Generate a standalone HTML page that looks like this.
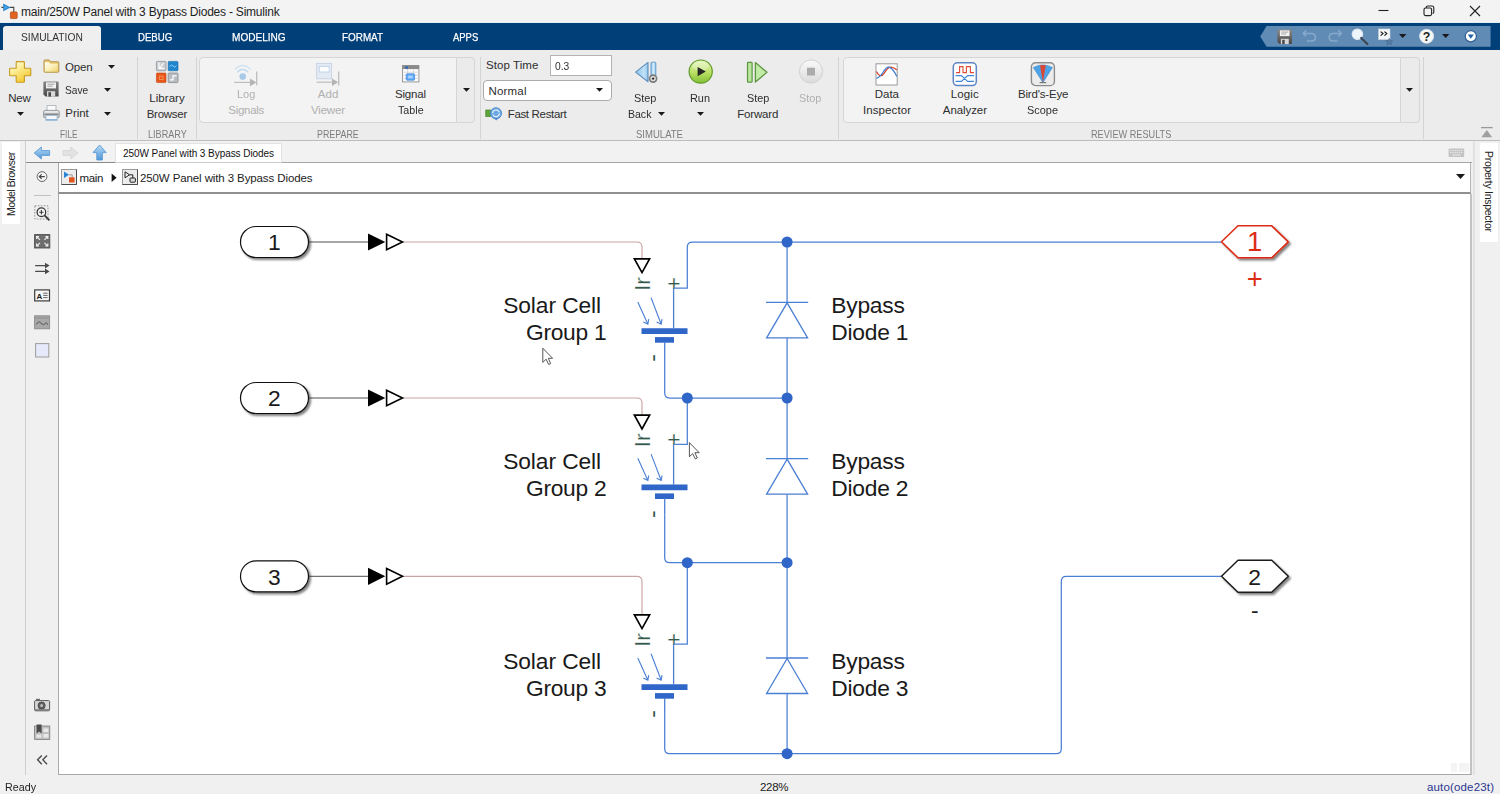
<!DOCTYPE html>
<html><head><meta charset="utf-8"><title>main/250W Panel with 3 Bypass Diodes - Simulink</title>
<style>
html,body{margin:0;padding:0;}
body{width:1500px;height:794px;overflow:hidden;position:relative;background:#f0f0f0;font-family:"Liberation Sans",sans-serif;}
.b{position:absolute;box-sizing:border-box;}
.t{position:absolute;white-space:pre;line-height:1;}
svg{overflow:visible;}
svg text{font-family:"Liberation Sans",sans-serif;}
</style></head><body>
<div class="b" style="left:0px;top:0px;width:1500px;height:23px;background:#f3f3f3;"></div>
<span class="t" style="left:21.0px;top:6.1px;font-size:12px;color:#1e1e1e;letter-spacing:-0.22px;">main/250W Panel with 3 Bypass Diodes - Simulink</span>
<div class="b" style="left:0px;top:22px;width:1500px;height:1px;background:#e3eef6;"></div>
<div class="b" style="left:0px;top:23px;width:1500px;height:27px;background:#003f77;"></div>
<div class="b" style="left:3px;top:26px;width:98px;height:25px;background:#efefef;border-radius:3px 3px 0 0;"></div>
<span class="t" style="left:20.7px;top:31.8px;font-size:11.5px;color:#333;letter-spacing:0.00px;transform:scaleX(0.890);transform-origin:0 0;">SIMULATION</span>
<span class="t" style="left:138.3px;top:31.8px;font-size:11.5px;color:#fff;letter-spacing:0.00px;transform:scaleX(0.836);transform-origin:0 0;-webkit-text-stroke:0.25px #fff;">DEBUG</span>
<span class="t" style="left:232.3px;top:31.8px;font-size:11.5px;color:#fff;letter-spacing:0.00px;transform:scaleX(0.875);transform-origin:0 0;-webkit-text-stroke:0.25px #fff;">MODELING</span>
<span class="t" style="left:341.7px;top:31.8px;font-size:11.5px;color:#fff;letter-spacing:0.00px;transform:scaleX(0.860);transform-origin:0 0;-webkit-text-stroke:0.25px #fff;">FORMAT</span>
<span class="t" style="left:453.3px;top:31.8px;font-size:11.5px;color:#fff;letter-spacing:0.00px;transform:scaleX(0.821);transform-origin:0 0;-webkit-text-stroke:0.25px #fff;">APPS</span>
<div class="b" style="left:0px;top:50px;width:1500px;height:91px;background:#ececec;border-bottom:1px solid #bdbdbd;"></div>
<div class="b" style="left:137px;top:57px;width:1px;height:82px;background:#d4d4d4;"></div>
<div class="b" style="left:196px;top:57px;width:1px;height:82px;background:#d4d4d4;"></div>
<div class="b" style="left:480px;top:57px;width:1px;height:82px;background:#d4d4d4;"></div>
<div class="b" style="left:838px;top:57px;width:1px;height:82px;background:#d4d4d4;"></div>
<div class="b" style="left:1423px;top:57px;width:1px;height:82px;background:#d4d4d4;"></div>
<div class="b" style="left:199px;top:57px;width:276px;height:66px;background:#f3f3f3;border:1px solid #d6d6d6;border-radius:4px;"></div>
<div class="b" style="left:456px;top:57px;width:19px;height:66px;background:#ebebeb;border:1px solid #d6d6d6;border-radius:0 4px 4px 0;"></div>
<div class="b" style="left:843px;top:57px;width:577px;height:66px;background:#f3f3f3;border:1px solid #d6d6d6;border-radius:4px;"></div>
<div class="b" style="left:1400px;top:57px;width:20px;height:66px;background:#ebebeb;border:1px solid #d6d6d6;border-radius:0 4px 4px 0;"></div>
<svg class="b" style="left:461.5px;top:87.2px;" width="9" height="5.7" viewBox="0 0 9 5.7"><path d="M1 1h7l-3.5 3.7z" fill="#1a1a1a"/></svg>
<svg class="b" style="left:1404.5px;top:87.2px;" width="9" height="5.7" viewBox="0 0 9 5.7"><path d="M1 1h7l-3.5 3.7z" fill="#1a1a1a"/></svg>
<span class="t" style="left:60.0px;top:129.0px;font-size:10.8px;color:#7c7c7c;letter-spacing:0.00px;transform:scaleX(0.776);transform-origin:0 0;">FILE</span>
<span class="t" style="left:147.7px;top:129.0px;font-size:10.8px;color:#7c7c7c;letter-spacing:0.00px;transform:scaleX(0.843);transform-origin:0 0;">LIBRARY</span>
<span class="t" style="left:317.3px;top:129.0px;font-size:10.8px;color:#7c7c7c;letter-spacing:0.00px;transform:scaleX(0.821);transform-origin:0 0;">PREPARE</span>
<span class="t" style="left:635.7px;top:129.0px;font-size:10.8px;color:#7c7c7c;letter-spacing:0.00px;transform:scaleX(0.883);transform-origin:0 0;">SIMULATE</span>
<span class="t" style="left:1090.7px;top:129.0px;font-size:10.8px;color:#7c7c7c;letter-spacing:0.00px;transform:scaleX(0.849);transform-origin:0 0;">REVIEW RESULTS</span>
<span class="t" style="left:8.3px;top:93.1px;font-size:11.5px;color:#2e2e2e;letter-spacing:-0.30px;">New</span>
<svg class="b" style="left:15.8px;top:110.7px;" width="9" height="5.7" viewBox="0 0 9 5.7"><path d="M1 1h7l-3.5 3.7z" fill="#1a1a1a"/></svg>
<span class="t" style="left:65.0px;top:61.9px;font-size:11.5px;color:#2e2e2e;letter-spacing:-0.14px;">Open</span>
<svg class="b" style="left:107.4px;top:63.9px;" width="9" height="5.7" viewBox="0 0 9 5.7"><path d="M1 1h7l-3.5 3.7z" fill="#1a1a1a"/></svg>
<span class="t" style="left:65.0px;top:84.6px;font-size:11.5px;color:#2e2e2e;letter-spacing:0.00px;transform:scaleX(0.885);transform-origin:0 0;">Save</span>
<svg class="b" style="left:102.5px;top:87.2px;" width="9" height="5.7" viewBox="0 0 9 5.7"><path d="M1 1h7l-3.5 3.7z" fill="#1a1a1a"/></svg>
<span class="t" style="left:65.3px;top:107.7px;font-size:11.5px;color:#2e2e2e;letter-spacing:-0.06px;">Print</span>
<svg class="b" style="left:103.0px;top:110.8px;" width="9" height="5.7" viewBox="0 0 9 5.7"><path d="M1 1h7l-3.5 3.7z" fill="#1a1a1a"/></svg>
<span class="t" style="left:149.3px;top:93.4px;font-size:11.5px;color:#2e2e2e;letter-spacing:0.04px;">Library</span>
<span class="t" style="left:146.7px;top:108.7px;font-size:11.5px;color:#2e2e2e;letter-spacing:-0.26px;">Browser</span>
<span class="t" style="left:236.7px;top:88.9px;font-size:11.5px;color:#b0b0b0;letter-spacing:0.00px;transform:scaleX(0.954);transform-origin:0 0;">Log</span>
<span class="t" style="left:228.3px;top:104.6px;font-size:11.5px;color:#b0b0b0;letter-spacing:-0.29px;">Signals</span>
<span class="t" style="left:317.7px;top:88.9px;font-size:11.5px;color:#b0b0b0;letter-spacing:0.07px;">Add</span>
<span class="t" style="left:311.0px;top:104.6px;font-size:11.5px;color:#b0b0b0;letter-spacing:-0.19px;">Viewer</span>
<span class="t" style="left:395.0px;top:88.9px;font-size:11.5px;color:#2e2e2e;letter-spacing:-0.19px;">Signal</span>
<span class="t" style="left:397.7px;top:104.6px;font-size:11.5px;color:#2e2e2e;letter-spacing:0.00px;transform:scaleX(0.931);transform-origin:0 0;">Table</span>
<span class="t" style="left:486.0px;top:60.4px;font-size:11.5px;color:#2e2e2e;letter-spacing:0.07px;">Stop Time</span>
<div class="b" style="left:550px;top:55.3px;width:62.4px;height:20.3px;background:#fff;border:1px solid #b3b3b3;"></div>
<span class="t" style="left:555.0px;top:61.1px;font-size:11.5px;color:#2e2e2e;letter-spacing:0.00px;transform:scaleX(0.894);transform-origin:0 0;">0.3</span>
<div class="b" style="left:483.4px;top:79.6px;width:129px;height:21px;background:#fff;border:1px solid #ababab;border-radius:4px;"></div>
<span class="t" style="left:488.5px;top:85.9px;font-size:11.5px;color:#2e2e2e;letter-spacing:0.19px;">Normal</span>
<svg class="b" style="left:594.5px;top:87.2px;" width="9" height="5.7" viewBox="0 0 9 5.7"><path d="M1 1h7l-3.5 3.7z" fill="#1a1a1a"/></svg>
<span class="t" style="left:507.7px;top:108.7px;font-size:11.5px;color:#2e2e2e;letter-spacing:-0.33px;">Fast Restart</span>
<span class="t" style="left:634.3px;top:93.1px;font-size:11.5px;color:#2e2e2e;letter-spacing:0.00px;transform:scaleX(0.947);transform-origin:0 0;">Step</span>
<span class="t" style="left:628.3px;top:108.7px;font-size:11.5px;color:#2e2e2e;letter-spacing:0.00px;transform:scaleX(0.915);transform-origin:0 0;">Back</span>
<svg class="b" style="left:657.2px;top:110.9px;" width="9" height="5.7" viewBox="0 0 9 5.7"><path d="M1 1h7l-3.5 3.7z" fill="#1a1a1a"/></svg>
<span class="t" style="left:690.0px;top:93.1px;font-size:11.5px;color:#2e2e2e;letter-spacing:0.00px;transform:scaleX(0.948);transform-origin:0 0;">Run</span>
<svg class="b" style="left:696.2px;top:110.9px;" width="9" height="5.7" viewBox="0 0 9 5.7"><path d="M1 1h7l-3.5 3.7z" fill="#1a1a1a"/></svg>
<span class="t" style="left:746.7px;top:93.1px;font-size:11.5px;color:#2e2e2e;letter-spacing:0.00px;transform:scaleX(0.943);transform-origin:0 0;">Step</span>
<span class="t" style="left:737.3px;top:108.7px;font-size:11.5px;color:#2e2e2e;letter-spacing:-0.20px;">Forward</span>
<span class="t" style="left:799.3px;top:93.1px;font-size:11.5px;color:#b0b0b0;letter-spacing:0.00px;transform:scaleX(0.947);transform-origin:0 0;">Stop</span>
<span class="t" style="left:874.7px;top:89.4px;font-size:11.5px;color:#2e2e2e;letter-spacing:0.00px;">Data</span>
<span class="t" style="left:863.0px;top:104.9px;font-size:11.5px;color:#2e2e2e;letter-spacing:0.09px;">Inspector</span>
<span class="t" style="left:950.7px;top:89.4px;font-size:11.5px;color:#2e2e2e;letter-spacing:0.13px;">Logic</span>
<span class="t" style="left:942.8px;top:104.9px;font-size:11.5px;color:#2e2e2e;letter-spacing:-0.08px;">Analyzer</span>
<span class="t" style="left:1018.0px;top:89.4px;font-size:11.5px;color:#2e2e2e;letter-spacing:-0.19px;">Bird's-Eye</span>
<span class="t" style="left:1027.0px;top:104.9px;font-size:11.5px;color:#2e2e2e;letter-spacing:0.00px;transform:scaleX(0.951);transform-origin:0 0;">Scope</span>
<div class="b" style="left:2px;top:142px;width:18px;height:82px;background:#fff;"></div>
<span class="t" style="left:15.3px;top:215.6px;font-size:10.5px;color:#222;letter-spacing:-0.48px;transform-origin:0 0;transform:rotate(-90deg) translateY(-0.8465em);">Model Browser</span>
<div class="b" style="left:25px;top:141px;width:1px;height:634px;background:#cfcfcf;"></div>
<div class="b" style="left:26px;top:141px;width:1446px;height:21px;background:#f2f2f2;"></div>
<div class="b" style="left:26px;top:162px;width:1446px;height:1px;background:#a6a6a6;"></div>
<div class="b" style="left:26px;top:162px;width:89px;height:1px;background:#8a8a8a;"></div>
<div class="b" style="left:114.5px;top:143px;width:167.5px;height:20px;background:#fff;border-top:1px solid #e3e3e3;border-left:1px solid #e3e3e3;border-right:1px solid #e3e3e3;"></div>
<div class="b" style="left:115px;top:162px;width:166.5px;height:1px;background:#cbcbcb;"></div>
<span class="t" style="left:123.0px;top:149.3px;font-size:10px;color:#111;letter-spacing:-0.06px;">250W Panel with 3 Bypass Diodes</span>
<div class="b" style="left:57.5px;top:163px;width:1413.5px;height:31px;background:#fff;border-left:1px solid #a9a9a9;border-right:1px solid #b4b4b4;border-bottom:2px solid #8f8f8f;"></div>
<span class="t" style="left:79.5px;top:172.7px;font-size:11.5px;color:#222;letter-spacing:-0.31px;">main</span>
<span class="t" style="left:140.0px;top:172.7px;font-size:11.5px;color:#222;letter-spacing:-0.11px;">250W Panel with 3 Bypass Diodes</span>
<div class="b" style="left:57.5px;top:194px;width:1414px;height:581px;background:#fff;border-left:1px solid #a9a9a9;border-right:2px solid #c2c2c2;border-bottom:1px solid #a8a8a8;"></div>
<div class="b" style="left:1473px;top:141px;width:2px;height:634px;background:#e2e2e2;"></div>
<div class="b" style="left:1451px;top:763px;width:6px;height:9px;background:#f4f4f4;"></div>
<div class="b" style="left:1459px;top:763px;width:10px;height:9px;background:#f4f4f4;"></div>
<div class="b" style="left:1480px;top:143px;width:18px;height:99px;background:#fff;"></div>
<span class="t" style="left:1484.5px;top:151.3px;font-size:10.5px;color:#222;letter-spacing:-0.28px;transform-origin:0 0;transform:rotate(90deg) translateY(-0.8465em);">Property Inspector</span>
<span class="t" style="left:5.0px;top:781.6px;font-size:11.5px;color:#222;letter-spacing:0.00px;transform:scaleX(0.933);transform-origin:0 0;">Ready</span>
<span class="t" style="left:760.0px;top:781.6px;font-size:11.5px;color:#222;letter-spacing:-0.30px;">228%</span>
<span class="t" style="left:1427.0px;top:781.6px;font-size:11.5px;color:#2a3590;letter-spacing:0.16px;">auto(ode23t)</span>
<svg class="b" style="left:0;top:0" width="0" height="0"><defs>
<linearGradient id="gY" x1="0" y1="0" x2="0.6" y2="1"><stop offset="0" stop-color="#fffef2"/><stop offset="0.45" stop-color="#fdec94"/><stop offset="1" stop-color="#f4c92e"/></linearGradient>
<linearGradient id="gF" x1="0" y1="0" x2="1" y2="1"><stop offset="0" stop-color="#fffef4"/><stop offset="0.5" stop-color="#fbf0bd"/><stop offset="1" stop-color="#f0d26c"/></linearGradient>
<linearGradient id="gG" x1="0" y1="0" x2="0" y2="1"><stop offset="0" stop-color="#e4f5b4"/><stop offset="0.55" stop-color="#b9df62"/><stop offset="1" stop-color="#80be34"/></linearGradient>
<linearGradient id="gB" x1="0" y1="0" x2="0" y2="1"><stop offset="0" stop-color="#b9dcf7"/><stop offset="1" stop-color="#4f97d6"/></linearGradient>
<linearGradient id="gS" x1="0" y1="0" x2="0" y2="1"><stop offset="0" stop-color="#fafafa"/><stop offset="1" stop-color="#dadada"/></linearGradient>
<linearGradient id="gD" x1="0" y1="0" x2="0" y2="1"><stop offset="0" stop-color="#878787"/><stop offset="1" stop-color="#484848"/></linearGradient>
<linearGradient id="gGr" x1="0" y1="0" x2="0" y2="1"><stop offset="0" stop-color="#f2f2f2"/><stop offset="1" stop-color="#bdbdbd"/></linearGradient>
<linearGradient id="gB2" x1="0" y1="0" x2="1" y2="0"><stop offset="0" stop-color="#8fc3ea"/><stop offset="0.7" stop-color="#c2e3f8"/><stop offset="1" stop-color="#8ebfe6"/></linearGradient>
<linearGradient id="gB3" x1="0" y1="0" x2="1" y2="0"><stop offset="0" stop-color="#8ec2ea"/><stop offset="0.5" stop-color="#d4eefd"/><stop offset="1" stop-color="#8ec2ea"/></linearGradient>
</defs></svg>
<svg class="b" style="left:0px;top:0px;" width="20" height="20" viewBox="0 0 20 20"><path d="M1.4 7.4H4M10 7.4H13.8V12.2" stroke="#444" stroke-width="1.1" fill="none"/><path d="M3.2 3.4L10.6 7.4L3.2 11.3z" fill="#2b86d2"/><path d="M4.6 5.8L7.6 7.4L4.6 9z" fill="#55b0ea"/><rect x="10.4" y="11.9" width="6.8" height="6.7" rx="0.9" fill="#e0641f" stroke="#b84c14" stroke-width="0.7"/></svg>
<svg class="b" style="left:1378px;top:5px;" width="12" height="12" viewBox="0 0 12 12"><path d="M0.5 5.5H10.5" stroke="#222" stroke-width="1.1"/></svg>
<svg class="b" style="left:1423px;top:5px;" width="12" height="12" viewBox="0 0 12 12"><rect x="1" y="3" width="7.6" height="7.6" rx="1.6" fill="none" stroke="#222" stroke-width="1.1"/><path d="M3.2 3V2.4Q3.2 1 4.8 1H9Q10.8 1 10.8 2.8V7Q10.8 8.4 9.6 8.5" fill="none" stroke="#222" stroke-width="1.1"/></svg>
<svg class="b" style="left:1469px;top:5px;" width="12" height="12" viewBox="0 0 12 12"><path d="M1 1L11 11M11 1L1 11" stroke="#222" stroke-width="1.1"/></svg>
<svg class="b" style="left:8px;top:60px;" width="25" height="24" viewBox="0 0 25 24"><path d="M9 1.6H15.6Q16.4 1.6 16.4 2.4V8.2H22Q22.8 8.2 22.8 9V15Q22.8 15.8 22 15.8H16.4V21.4Q16.4 22.2 15.6 22.2H9Q8.2 22.2 8.2 21.4V15.8H2.4Q1.6 15.8 1.6 15V9Q1.6 8.2 2.4 8.2H8.2V2.4Q8.2 1.6 9 1.6z" fill="url(#gY)" stroke="#c79a22" stroke-width="1.1"/></svg>
<svg class="b" style="left:43px;top:59px;" width="17" height="14" viewBox="0 0 17 14"><path d="M1 1.8Q1 1 1.8 1H6.2L7.8 2.8H15Q15.8 2.8 15.8 3.6V12.4Q15.8 13.2 15 13.2H1.8Q1 13.2 1 12.4z" fill="#e8cc74" stroke="#b3924a" stroke-width="1"/><path d="M1.9 12.5V3.2H5.6L7.2 4.8H14.9V12.5z" fill="url(#gF)"/></svg>
<svg class="b" style="left:43.4px;top:81px;" width="16.0" height="16.0" viewBox="0 0 16 16"><path d="M1 0.6H15Q15.6 0.6 15.6 1.2V15Q15.6 15.6 15 15.6H2.6L0.4 13.4V1.2Q0.4 0.6 1 0.6z" fill="url(#gD)"/><rect x="3" y="1.4" width="10" height="6" fill="#f2f2f2"/><path d="M4.4 3.2H11.6M4.4 5.2H9.6" stroke="#9a9a9a" stroke-width="0.9"/><rect x="4" y="10.2" width="8.2" height="5.4" fill="#d9d9d9"/><rect x="5.4" y="11.2" width="2.6" height="4.4" fill="#4a4a4a"/></svg>
<svg class="b" style="left:43px;top:105px;" width="17" height="16" viewBox="0 0 17 16"><rect x="4" y="0.6" width="9" height="6" fill="#fbfbfb" stroke="#a6adb5" stroke-width="0.8"/><rect x="0.6" y="5.4" width="15.6" height="7.4" rx="1.6" fill="url(#gGr)" stroke="#7d848c" stroke-width="0.8"/><path d="M1.4 9.2H15.4" stroke="#6d747c" stroke-width="1.2"/><rect x="3" y="10.6" width="11" height="4.2" fill="#f4f8fc" stroke="#9fb4c8" stroke-width="0.7"/><path d="M2.6 15H14.4" stroke="#5f9bd0" stroke-width="1"/></svg>
<svg class="b" style="left:156px;top:61px;" width="23" height="22" viewBox="0 0 23 22"><rect x="0.4" y="0.4" width="9.6" height="9.4" rx="0.8" fill="#c9cdd2" stroke="#8f959c" stroke-width="0.8"/><path d="M3 1.6V7.4H8.2M3.6 6.8L7.6 2.2" stroke="#fff" stroke-width="1.1" fill="none"/><rect x="12.2" y="0.4" width="9.8" height="9.4" rx="0.8" fill="#1f85cc" stroke="#176aa8" stroke-width="0.6"/><path d="M13.8 5.6Q15.4 2.4 17 5Q18.6 7.6 20.4 4.6" stroke="#8fd0ff" stroke-width="1" fill="none"/><rect x="0.4" y="12" width="9.6" height="9.6" rx="0.8" fill="#e8561a" stroke="#c4440f" stroke-width="0.6"/><rect x="3.6" y="15.2" width="3.4" height="3.4" fill="none" stroke="#f59a5c" stroke-width="0.9"/><rect x="12.2" y="12" width="9.8" height="9.6" rx="0.8" fill="#b9bdc2" stroke="#858b92" stroke-width="0.8"/><path d="M13.8 18.8H17V14.8H20.6" stroke="#fff" stroke-width="1.2" fill="none"/></svg>
<svg class="b" style="left:232px;top:62px;" width="28" height="25" viewBox="0 0 28 25"><circle cx="10.7" cy="14.6" r="3.3" fill="#a9c9e8"/><path d="M5.2 10.2Q10.7 4.6 16.2 10.2" stroke="#bcd7ee" stroke-width="1.3" fill="none"/><path d="M2.6 7.6Q10.7 -0.6 18.8 7.6" stroke="#d0e3f3" stroke-width="1.3" fill="none"/><path d="M2.2 20.4H19" stroke="#bdbdbd" stroke-width="1.2"/><path d="M18 16.4L24.4 20.4L18 24.2z" fill="#b4b4b4"/><path d="M24.7 9.4V23.4" stroke="#bdbdbd" stroke-width="1.3"/></svg>
<svg class="b" style="left:315px;top:62px;" width="26" height="25" viewBox="0 0 26 25"><rect x="1.6" y="1.4" width="15" height="15.4" fill="#e3eaf3" stroke="#c6d3e2" stroke-width="0.9"/><rect x="4.2" y="4.4" width="10" height="5.6" fill="#fbfdff" stroke="#bcd0e6" stroke-width="0.9"/><path d="M1.6 20.2H18" stroke="#bdbdbd" stroke-width="1.2"/><path d="M17 16.4L23.2 20.2L17 24z" fill="#b4b4b4"/><path d="M23.7 9.6V23.4" stroke="#bdbdbd" stroke-width="1.3"/></svg>
<svg class="b" style="left:402px;top:65px;" width="18" height="18" viewBox="0 0 18 18"><rect x="0.5" y="0.5" width="16.4" height="16.4" fill="#fdfdfd" stroke="#8d8d8d" stroke-width="0.9"/><rect x="0.5" y="0.5" width="16.4" height="3.6" fill="#8a8a8a"/><circle cx="4.6" cy="2.6" r="1.3" fill="#1c63c4"/><path d="M0.5 7.2H17M0.5 10.2H17M0.5 13.4H17M5.6 4V17M11.4 4V17" stroke="#cfcfcf" stroke-width="0.8"/><rect x="4.2" y="8.8" width="8.4" height="6.4" rx="1" fill="#5fa8f5" stroke="#3f8be0" stroke-width="0.7"/><rect x="6" y="10.6" width="4.8" height="2.8" fill="#a9d2ff"/></svg>
<svg class="b" style="left:485px;top:107px;" width="18" height="14" viewBox="0 0 18 14"><rect x="0.8" y="3" width="4.8" height="6.6" fill="#5da53a" stroke="#3f7f24" stroke-width="0.7"/><circle cx="11" cy="6.3" r="5.6" fill="#6aa7e4" stroke="#3f7fc6" stroke-width="0.8"/><path d="M7.6 6.3A3.4 3.4 0 0 1 14.2 5.2M14.4 6.3A3.4 3.4 0 0 1 7.8 7.4" stroke="#e8f3ff" stroke-width="1.1" fill="none"/><path d="M9.6 11.6L11.2 13.6L12.6 11.6z" fill="#3f7fc6"/></svg>
<svg class="b" style="left:634px;top:61px;" width="24" height="23" viewBox="0 0 24 23"><path d="M14 1.4V20.8L1.6 11.1z" fill="url(#gB2)" stroke="#5b8fbf" stroke-width="1.1" stroke-linejoin="round"/><rect x="17" y="1.2" width="4.8" height="15" rx="0.8" fill="url(#gB3)" stroke="#6a9cc9" stroke-width="1"/><circle cx="19.1" cy="17.6" r="4.3" fill="#7a7a7a"/><circle cx="19.1" cy="17.6" r="2.7" fill="#e2e2e2"/><circle cx="19.1" cy="17.6" r="1.2" fill="#2e2e2e"/></svg>
<svg class="b" style="left:688px;top:59px;" width="26" height="26" viewBox="0 0 26 26"><circle cx="12.7" cy="12.6" r="11.6" fill="url(#gG)" stroke="#5f9b2a" stroke-width="1.2"/><ellipse cx="12.7" cy="7" rx="8.4" ry="4.6" fill="#fff" opacity="0.28"/><path d="M9.6 8L17.8 12.6L9.6 17.2z" fill="#262626"/></svg>
<svg class="b" style="left:746px;top:61px;" width="23" height="23" viewBox="0 0 23 23"><rect x="1.5" y="1.4" width="4.6" height="19.8" rx="0.6" fill="#b9e69c" stroke="#5f9642" stroke-width="1.2"/><path d="M9.4 1.6L21 11.3L9.4 21z" fill="#c2eba6" stroke="#5f9642" stroke-width="1.3" stroke-linejoin="round"/></svg>
<svg class="b" style="left:798px;top:59px;" width="26" height="26" viewBox="0 0 26 26"><circle cx="13" cy="12.5" r="11.6" fill="url(#gS)" stroke="#d2d2d2" stroke-width="1"/><rect x="9" y="8.7" width="8" height="7.8" fill="#ababab"/></svg>
<svg class="b" style="left:875px;top:63px;" width="24" height="23" viewBox="0 0 24 23"><rect x="1" y="0.8" width="21.2" height="21.2" fill="#fff" stroke="#9a9a9a" stroke-width="1"/><path d="M1.4 8.6Q5.4 16.4 9.6 9.6T17 4.4Q19.6 4.8 21.8 7" stroke="#d8422c" stroke-width="1.2" fill="none"/><path d="M1.4 15.4Q5 14.4 8.4 8.8T14.6 4.4Q18.4 6 21.8 13.6" stroke="#3b7dd0" stroke-width="1.2" fill="none"/></svg>
<svg class="b" style="left:952px;top:62px;" width="26" height="25" viewBox="0 0 26 25"><rect x="1.3" y="0.8" width="23" height="22.8" rx="4" fill="#fff" stroke="#5f84c4" stroke-width="1.5"/><path d="M4 10.6H7.6V4.6H11V10.6H14.4V4.6H18.4V10.6H22" stroke="#e04a36" stroke-width="1.1" fill="none"/><path d="M3.6 13.6H9.4L15.6 19.4H22M3.6 19.4H9.4L15.6 13.6H22" stroke="#3f86d6" stroke-width="1.1" fill="none"/></svg>
<svg class="b" style="left:1030px;top:62px;" width="26" height="25" viewBox="0 0 26 25"><rect x="1.4" y="0.8" width="23" height="22.8" rx="4.2" fill="#ececec" stroke="#8c8c8c" stroke-width="1.4"/><path d="M12.9 20.4L3.4 5.6Q12.9 0.2 22.4 5.6z" fill="#4ea3e6" stroke="#2f7fc2" stroke-width="0.6"/><path d="M12.9 20.6L10 3.2Q12.9 2.6 15.8 3.2z" fill="#d8483a"/><path d="M9.6 20.6H16.2" stroke="#777" stroke-width="1.2"/></svg>
<svg class="b" style="left:1480px;top:126px;" width="14" height="13" viewBox="0 0 14 13"><path d="M1 1.6H12.6" stroke="#9a9a9a" stroke-width="1.3"/><path d="M6.8 4L12.2 11.2H1.4z" fill="#a0a0a0"/></svg>
<svg class="b" style="left:1260px;top:26px" width="231" height="21" viewBox="0 0 231 21"><path d="M6.6 0H230.6V20.8H6.6L0.2 10.4z" fill="#608bb5"/></svg>
<svg class="b" style="left:1276.6px;top:28.8px;" width="15.4" height="15.4" viewBox="0 0 16 16"><path d="M1 0.6H15Q15.6 0.6 15.6 1.2V15Q15.6 15.6 15 15.6H2.6L0.4 13.4V1.2Q0.4 0.6 1 0.6z" fill="url(#gD)"/><rect x="3" y="1.4" width="10" height="6" fill="#f2f2f2"/><path d="M4.4 3.2H11.6M4.4 5.2H9.6" stroke="#9a9a9a" stroke-width="0.9"/><rect x="4" y="10.2" width="8.2" height="5.4" fill="#d9d9d9"/><rect x="5.4" y="11.2" width="2.6" height="4.4" fill="#4a4a4a"/></svg>
<svg class="b" style="left:1302px;top:29px;" width="16" height="14" viewBox="0 0 16 14"><path d="M4.2 1.4L1.2 4.4L4.2 7.4M1.6 4.4H9.4Q13.4 4.4 13.4 8.2T9.4 12H5" stroke="#86a9cb" stroke-width="1.5" fill="none"/></svg>
<svg class="b" style="left:1327px;top:29px;" width="16" height="14" viewBox="0 0 16 14"><path d="M11.4 1.4L14.4 4.4L11.4 7.4M14 4.4H6.2Q2.2 4.4 2.2 8.2T6.2 12H10.6" stroke="#86a9cb" stroke-width="1.5" fill="none"/></svg>
<svg class="b" style="left:1350px;top:27px;" width="20" height="19" viewBox="0 0 20 19"><circle cx="7.4" cy="7.2" r="5.2" fill="#eef5fb" stroke="#dfe9f2" stroke-width="1.2"/><path d="M11.2 11L17.4 17" stroke="#3c4652" stroke-width="2.2" stroke-linecap="round"/></svg>
<svg class="b" style="left:1378px;top:28px;" width="16" height="17" viewBox="0 0 16 17"><rect x="0.6" y="1" width="11.4" height="10.6" fill="#f4f6f8" stroke="#cfd6dd" stroke-width="0.6"/><path d="M2.6 3.6L5 5.6L2.6 7.6M6.4 3.6L8.8 5.6L6.4 7.6" stroke="#1b1b1b" stroke-width="1.2" fill="none"/><path d="M11.2 10.4L12.2 12.6L14.6 12.8L12.8 14.4L13.4 16.8L11.2 15.4L9 16.8L9.6 14.4L7.8 12.8L10.2 12.6z" fill="#5a7ea6" stroke="#3f5f86" stroke-width="0.5"/></svg>
<svg class="b" style="left:1398.3px;top:33.4px;" width="9.4" height="6" viewBox="0 0 9.4 6"><path d="M1 1h7.4l-3.7 4z" fill="#1a1a1a"/></svg>
<svg class="b" style="left:1418px;top:28px;" width="17" height="17" viewBox="0 0 17 17"><circle cx="8.6" cy="8.3" r="7" fill="#f7f7f7" stroke="#dbe3ea" stroke-width="0.8"/><text x="8.6" y="12.6" font-size="12.5" font-weight="bold" text-anchor="middle" fill="#222">?</text></svg>
<svg class="b" style="left:1441.1px;top:33.4px;" width="9.4" height="6" viewBox="0 0 9.4 6"><path d="M1 1h7.4l-3.7 4z" fill="#1a1a1a"/></svg>
<svg class="b" style="left:1464px;top:29px;" width="14" height="14" viewBox="0 0 14 14"><circle cx="6.8" cy="7.3" r="5.6" fill="#fff" stroke="#2f5f94" stroke-width="1.2"/><path d="M3.8 5.6H9.8L6.8 9.8z" fill="#1f5fa8"/></svg>
<svg class="b" style="left:33px;top:146px;" width="18" height="14" viewBox="0 0 18 14"><path d="M1.2 7L8.4 1V4.6H16.6V9.4H8.4V13z" fill="url(#gB)" stroke="#5a9ad6" stroke-width="0.9" stroke-linejoin="round"/></svg>
<svg class="b" style="left:62px;top:146px;" width="18" height="14" viewBox="0 0 18 14"><path d="M16 7L8.8 1V4.6H1V9.4H8.8V13z" fill="#e2e2e2" stroke="#d6d6d6" stroke-width="0.9" stroke-linejoin="round"/></svg>
<svg class="b" style="left:92px;top:144px;" width="16" height="17" viewBox="0 0 16 17"><path d="M7.6 1L14.2 8.6H10.4V16H4.8V8.6H1z" fill="url(#gB)" stroke="#5a9ad6" stroke-width="0.9" stroke-linejoin="round"/></svg>
<svg class="b" style="left:1448px;top:148px;" width="17" height="10" viewBox="0 0 17 10"><rect x="0.6" y="0.6" width="15.6" height="8.4" rx="1" fill="#c4c4c4"/><path d="M2 2.6H15M2 4.6H15" stroke="#efefef" stroke-width="0.9" stroke-dasharray="1.4 0.8"/><path d="M4.4 7H12.6" stroke="#efefef" stroke-width="0.9"/></svg>
<svg class="b" style="left:36px;top:171px;" width="12" height="12" viewBox="0 0 12 12"><circle cx="6" cy="5.6" r="4.9" fill="#f4f4f4" stroke="#666" stroke-width="1"/><path d="M8.8 5.6H3.6M5.6 3.4L3.4 5.6L5.6 7.8" stroke="#444" stroke-width="1.2" fill="none"/></svg>
<svg class="b" style="left:61px;top:169px;" width="16" height="16" viewBox="0 0 16 16"><rect x="0.5" y="0.5" width="15" height="15" fill="#ececec" stroke="#9a9a9a" stroke-width="1"/><path d="M0.5 15.5H15.5V0.5" fill="none" stroke="#4c4c4c" stroke-width="1"/><path d="M3 2.6L8 5.8L3 9z" fill="#2a84d6"/><path d="M8 5.8H11.2V8.4" stroke="#888" stroke-width="0.8" fill="none"/><rect x="8" y="8.2" width="5.6" height="5.4" rx="0.6" fill="#e2571f"/></svg>
<svg class="b" style="left:110.5px;top:172.5px;" width="7" height="10" viewBox="0 0 7 10"><path d="M0.6 0.4L5.6 4.7L0.6 9z" fill="#111"/></svg>
<svg class="b" style="left:122px;top:169px;" width="16" height="16" viewBox="0 0 16 16"><rect x="0.5" y="0.5" width="15" height="15" fill="#ececec" stroke="#9a9a9a" stroke-width="1"/><path d="M0.5 15.5H15.5V0.5" fill="none" stroke="#4c4c4c" stroke-width="1"/><path d="M3 2.8L7.6 5.8L3 8.8z" fill="#f4f4f4" stroke="#222" stroke-width="1"/><path d="M7.6 5.8H10.8V9" stroke="#222" stroke-width="1" fill="none"/><rect x="8" y="9" width="5.4" height="4.2" rx="0.8" fill="#ddd" stroke="#222" stroke-width="1"/></svg>
<svg class="b" style="left:1455.1px;top:172.5px;" width="11" height="7" viewBox="0 0 11 7"><path d="M1 1h9l-4.5 5z" fill="#1a1a1a"/></svg>
<div class="b" style="left:34px;top:195px;width:17px;height:1px;background:#c2c2c2;"></div>
<svg class="b" style="left:34px;top:205px;" width="17" height="17" viewBox="0 0 17 17"><rect x="0.8" y="0.8" width="13.2" height="13.2" fill="none" stroke="#8a8a8a" stroke-width="0.9" stroke-dasharray="1.6 1.4"/><circle cx="7.4" cy="7.2" r="4.3" fill="#fafafa" stroke="#3a3a3a" stroke-width="1.3"/><path d="M5.2 7.2H9.6M7.4 5V9.4" stroke="#3a3a3a" stroke-width="1.1"/><path d="M10.6 10.4L15.4 15.4" stroke="#3a3a3a" stroke-width="1.8"/></svg>
<svg class="b" style="left:34px;top:234px;" width="17" height="15" viewBox="0 0 17 15"><rect x="0.6" y="0.6" width="15.2" height="13.4" fill="#6e6e6e" stroke="#4e4e4e" stroke-width="0.9"/><path d="M2.6 5V2.6H5M11.4 2.6H13.8V5M13.8 9.6V12H11.4M5 12H2.6V9.6M2.8 2.8L6 5.8M13.6 2.8L10.4 5.8M13.6 11.8L10.4 8.8M2.8 11.8L6 8.8" stroke="#f2f2f2" stroke-width="1.1" fill="none"/></svg>
<svg class="b" style="left:34px;top:262px;" width="17" height="13" viewBox="0 0 17 13"><path d="M1.2 3.6H14M1.2 9.4H14" stroke="#4a4a4a" stroke-width="1.3"/><path d="M11 0.8L15.6 3.6L11 6.4z M11 6.6L15.6 9.4L11 12.2z" fill="#4a4a4a"/></svg>
<svg class="b" style="left:34px;top:289px;" width="17" height="13" viewBox="0 0 17 13"><rect x="0.7" y="0.9" width="14.8" height="11" fill="#f6f6f6" stroke="#3c3c3c" stroke-width="1.2"/><text x="2.4" y="9.8" font-size="8" font-weight="bold" fill="#222">A</text><path d="M9.2 4.2H13.6M9.2 6.4H13.6M9.2 8.6H13.6" stroke="#555" stroke-width="0.9"/></svg>
<svg class="b" style="left:34px;top:315px;" width="17" height="15" viewBox="0 0 17 15"><rect x="0.6" y="0.8" width="15" height="13" fill="#a9a9a9" stroke="#8a8a8a" stroke-width="0.9"/><path d="M1.4 3H15" stroke="#8d8d8d" stroke-width="1"/><path d="M2.4 9.6Q4.6 5 7 8.2T11.6 8Q12.8 7.4 13.8 10" stroke="#6a6a6a" stroke-width="1.1" fill="none"/></svg>
<svg class="b" style="left:35px;top:343px;" width="15" height="15" viewBox="0 0 15 15"><rect x="0.6" y="0.6" width="13.2" height="13.4" fill="#e6e9fa" stroke="#9c9c9c" stroke-width="1"/></svg>
<svg class="b" style="left:34px;top:698px;" width="17" height="14" viewBox="0 0 17 14"><rect x="0.6" y="2.6" width="15" height="10.2" rx="1" fill="#d8d8d8" stroke="#5a5a5a" stroke-width="1"/><rect x="2" y="0.8" width="4" height="2" fill="#6a6a6a"/><circle cx="7.6" cy="7.6" r="3.6" fill="#5f5f5f" stroke="#444" stroke-width="0.8"/><circle cx="7.6" cy="7.6" r="1.5" fill="#bdbdbd"/><path d="M1 11.6H15.4" stroke="#777" stroke-width="0.9"/></svg>
<svg class="b" style="left:34px;top:724px;" width="17" height="17" viewBox="0 0 17 17"><rect x="0.6" y="2" width="15.2" height="13.4" fill="#bfbfbf" stroke="#7c7c7c" stroke-width="0.8"/><path d="M2.6 0.6H7.6V9.4L5.1 7.4L2.6 9.4z" fill="#4a4a4a"/><rect x="9.4" y="4.4" width="5" height="3.6" fill="#e8e8e8"/><rect x="9.4" y="10" width="5" height="3.6" fill="#e8e8e8"/><rect x="2.4" y="10.6" width="5" height="3" fill="#e8e8e8"/></svg>
<svg class="b" style="left:36px;top:754px;" width="13" height="12" viewBox="0 0 13 12"><path d="M5.8 1.4L1.6 5.8L5.8 10.2M11 1.4L6.8 5.8L11 10.2" stroke="#4a4a4a" stroke-width="1.4" fill="none"/></svg>
<svg class="b" style="left:0;top:0;" width="1500" height="794" viewBox="0 0 1500 794"><defs>
<filter id="sh" x="-20%" y="-30%" width="150%" height="180%"><feGaussianBlur in="SourceAlpha" stdDeviation="1.2"/><feOffset dx="1.8" dy="2.2"/><feComponentTransfer><feFuncA type="linear" slope="0.5"/></feComponentTransfer><feMerge><feMergeNode/><feMergeNode in="SourceGraphic"/></feMerge></filter>
</defs><path d="M673.6 288H687.3V247Q687.3 242 692.3 242H1221.5" stroke="#4a7fd4" stroke-width="1.25" fill="none"/><path d="M787.1 242V753.7" stroke="#4a7fd4" stroke-width="1.25" fill="none"/><path d="M664.7 358V393Q664.7 398 669.7 398H787.1" stroke="#4a7fd4" stroke-width="1.25" fill="none"/><path d="M673.6 444.3H687.3V398" stroke="#4a7fd4" stroke-width="1.25" fill="none"/><path d="M664.7 514.3V557.7Q664.7 562.7 669.7 562.7H787.1" stroke="#4a7fd4" stroke-width="1.25" fill="none"/><path d="M673.6 644.0H687.3V562.7" stroke="#4a7fd4" stroke-width="1.25" fill="none"/><path d="M664.7 714.0V748.7Q664.7 753.7 669.7 753.7H1056.3Q1061.3 753.7 1061.3 748.7V581.3Q1061.3 576.3 1066.3 576.3H1221.5" stroke="#4a7fd4" stroke-width="1.25" fill="none"/><path d="M403 242H637Q642 242 642 247V258.5" stroke="#c9a3a3" stroke-width="1.15" fill="none"/><path d="M634.4 258.8H649.6L642 272.6z" fill="#fff" stroke="#000" stroke-width="1.7"/><text x="0" y="0" font-size="22.8" text-anchor="start" fill="#33594a" stroke="#fff" stroke-width="0.25" transform="translate(649.8 291) rotate(-90)">Ir</text><text x="673.8" y="290.6" font-size="22.8" text-anchor="middle" fill="#33594a" stroke="#fff" stroke-width="0.2">+</text><text x="0" y="0" font-size="22.8" text-anchor="middle" fill="#33594a" transform="translate(659.6 358) rotate(-90)">-</text><path d="M637.8 301.9L647.9 324.2M643.3 322.0L647.9 324.2L648.6999999999999 319.2" stroke="#4a7fd4" stroke-width="1.1" fill="none"/><path d="M651.1 297.8L661.2 324.2M656.6 322.0L661.2 324.2L662.0 319.2" stroke="#4a7fd4" stroke-width="1.1" fill="none"/><path d="M641.5 331.1H687.5" stroke="#2f66c8" stroke-width="5.6"/><path d="M655 339.9H674" stroke="#2f66c8" stroke-width="5.6"/><path d="M673.6 328.5V288" stroke="#4a7fd4" stroke-width="1.3" fill="none"/><path d="M664.7 342V358" stroke="#4a7fd4" stroke-width="1.3" fill="none"/><path d="M403 398H637Q642 398 642 403V414.8" stroke="#c9a3a3" stroke-width="1.15" fill="none"/><path d="M634.4 415.1H649.6L642 428.90000000000003z" fill="#fff" stroke="#000" stroke-width="1.7"/><text x="0" y="0" font-size="22.8" text-anchor="start" fill="#33594a" stroke="#fff" stroke-width="0.25" transform="translate(649.8 447.3) rotate(-90)">Ir</text><text x="673.8" y="446.90000000000003" font-size="22.8" text-anchor="middle" fill="#33594a" stroke="#fff" stroke-width="0.2">+</text><text x="0" y="0" font-size="22.8" text-anchor="middle" fill="#33594a" transform="translate(659.6 514.3) rotate(-90)">-</text><path d="M637.8 458.2L647.9 480.5M643.3 478.3L647.9 480.5L648.6999999999999 475.5" stroke="#4a7fd4" stroke-width="1.1" fill="none"/><path d="M651.1 454.1L661.2 480.5M656.6 478.3L661.2 480.5L662.0 475.5" stroke="#4a7fd4" stroke-width="1.1" fill="none"/><path d="M641.5 487.40000000000003H687.5" stroke="#2f66c8" stroke-width="5.6"/><path d="M655 496.2H674" stroke="#2f66c8" stroke-width="5.6"/><path d="M673.6 484.8V444.3" stroke="#4a7fd4" stroke-width="1.3" fill="none"/><path d="M664.7 498.3V514.3" stroke="#4a7fd4" stroke-width="1.3" fill="none"/><path d="M403 576.3H637Q642 576.3 642 581.3V614.5" stroke="#c9a3a3" stroke-width="1.15" fill="none"/><path d="M634.4 614.8H649.6L642 628.6z" fill="#fff" stroke="#000" stroke-width="1.7"/><text x="0" y="0" font-size="22.8" text-anchor="start" fill="#33594a" stroke="#fff" stroke-width="0.25" transform="translate(649.8 647.0) rotate(-90)">Ir</text><text x="673.8" y="646.6" font-size="22.8" text-anchor="middle" fill="#33594a" stroke="#fff" stroke-width="0.2">+</text><text x="0" y="0" font-size="22.8" text-anchor="middle" fill="#33594a" transform="translate(659.6 714.0) rotate(-90)">-</text><path d="M637.8 657.9L647.9 680.2M643.3 678.0L647.9 680.2L648.6999999999999 675.2" stroke="#4a7fd4" stroke-width="1.1" fill="none"/><path d="M651.1 653.8L661.2 680.2M656.6 678.0L661.2 680.2L662.0 675.2" stroke="#4a7fd4" stroke-width="1.1" fill="none"/><path d="M641.5 687.1H687.5" stroke="#2f66c8" stroke-width="5.6"/><path d="M655 695.9H674" stroke="#2f66c8" stroke-width="5.6"/><path d="M673.6 684.5V644.0" stroke="#4a7fd4" stroke-width="1.3" fill="none"/><path d="M664.7 698.0V714.0" stroke="#4a7fd4" stroke-width="1.3" fill="none"/><path d="M766 302.4H808.2" stroke="#4a7fd4" stroke-width="1.3" fill="none"/><path d="M787.1 302.9L807.6 337.9H766.6z" stroke="#4a7fd4" stroke-width="1.3" fill="#fff" stroke-linejoin="miter"/><text x="831.3" y="312.9" font-size="22.8" text-anchor="start" fill="#1a1a1a" letter-spacing="-0.25">Bypass</text><text x="831.3" y="339.9" font-size="22.8" text-anchor="start" fill="#1a1a1a" letter-spacing="-0.25">Diode 1</text><path d="M766 458.7H808.2" stroke="#4a7fd4" stroke-width="1.3" fill="none"/><path d="M787.1 459.2L807.6 494.2H766.6z" stroke="#4a7fd4" stroke-width="1.3" fill="#fff" stroke-linejoin="miter"/><text x="831.3" y="469.2" font-size="22.8" text-anchor="start" fill="#1a1a1a" letter-spacing="-0.25">Bypass</text><text x="831.3" y="496.2" font-size="22.8" text-anchor="start" fill="#1a1a1a" letter-spacing="-0.25">Diode 2</text><path d="M766 658.0H808.2" stroke="#4a7fd4" stroke-width="1.3" fill="none"/><path d="M787.1 658.5L807.6 693.5H766.6z" stroke="#4a7fd4" stroke-width="1.3" fill="#fff" stroke-linejoin="miter"/><text x="831.3" y="668.5" font-size="22.8" text-anchor="start" fill="#1a1a1a" letter-spacing="-0.25">Bypass</text><text x="831.3" y="695.5" font-size="22.8" text-anchor="start" fill="#1a1a1a" letter-spacing="-0.25">Diode 3</text><text x="503.2" y="313" font-size="22.8" text-anchor="start" fill="#1a1a1a" letter-spacing="-0.1">Solar Cell</text><text x="526" y="339.6" font-size="22.8" text-anchor="start" fill="#1a1a1a" letter-spacing="-0.3">Group 1</text><text x="503.2" y="469.3" font-size="22.8" text-anchor="start" fill="#1a1a1a" letter-spacing="-0.1">Solar Cell</text><text x="526" y="495.90000000000003" font-size="22.8" text-anchor="start" fill="#1a1a1a" letter-spacing="-0.3">Group 2</text><text x="503.2" y="669.0" font-size="22.8" text-anchor="start" fill="#1a1a1a" letter-spacing="-0.1">Solar Cell</text><text x="526" y="695.6" font-size="22.8" text-anchor="start" fill="#1a1a1a" letter-spacing="-0.3">Group 3</text><circle cx="787.1" cy="242" r="5.5" fill="#2f66c8"/><circle cx="687.3" cy="398" r="5.5" fill="#2f66c8"/><circle cx="787.1" cy="398" r="5.5" fill="#2f66c8"/><circle cx="687.3" cy="562.7" r="5.5" fill="#2f66c8"/><circle cx="787.1" cy="562.7" r="5.5" fill="#2f66c8"/><circle cx="787.1" cy="753.7" r="5.5" fill="#2f66c8"/><rect x="240.5" y="226.5" width="68" height="31" rx="15.5" fill="#fff" stroke="#111" stroke-width="1.2" filter="url(#sh)"/><text x="274.3" y="250.2" font-size="22.8" text-anchor="middle" fill="#1a1a1a" >1</text><path d="M309 242H368" stroke="#3a3a3a" stroke-width="0.9" fill="none"/><path d="M368 233.4L385.3 242L368 250.6z" fill="#000"/><path d="M386.6 234.2L402.5 242L386.6 249.8z" fill="#fff" stroke="#000" stroke-width="1.6" stroke-linejoin="miter"/><rect x="240.5" y="382.5" width="68" height="31" rx="15.5" fill="#fff" stroke="#111" stroke-width="1.2" filter="url(#sh)"/><text x="274.3" y="406.2" font-size="22.8" text-anchor="middle" fill="#1a1a1a" >2</text><path d="M309 398H368" stroke="#3a3a3a" stroke-width="0.9" fill="none"/><path d="M368 389.4L385.3 398L368 406.6z" fill="#000"/><path d="M386.6 390.2L402.5 398L386.6 405.8z" fill="#fff" stroke="#000" stroke-width="1.6" stroke-linejoin="miter"/><rect x="240.5" y="560.8" width="68" height="31" rx="15.5" fill="#fff" stroke="#111" stroke-width="1.2" filter="url(#sh)"/><text x="274.3" y="584.5" font-size="22.8" text-anchor="middle" fill="#1a1a1a" >3</text><path d="M309 576.3H368" stroke="#3a3a3a" stroke-width="0.9" fill="none"/><path d="M368 567.6999999999999L385.3 576.3L368 584.9z" fill="#000"/><path d="M386.6 568.5L402.5 576.3L386.6 584.0999999999999z" fill="#fff" stroke="#000" stroke-width="1.6" stroke-linejoin="miter"/><path d="M1221.5 241.8L1238 225.8H1271.7L1288.3 241.8L1271.7 257.8H1238z" fill="#fff" stroke="#dc2c14" stroke-width="1.6" stroke-linejoin="round" filter="url(#sh)"/><text x="1254.6" y="250.8" font-size="27.4" text-anchor="middle" fill="#dc2c14" >1</text><text x="1254.7" y="288.2" font-size="27.4" text-anchor="middle" fill="#dc2c14" >+</text><path d="M1221.5 576.2L1238 560.2H1271.7L1288.3 576.2L1271.7 592.2H1238z" fill="#fff" stroke="#1c1c1c" stroke-width="1.5" stroke-linejoin="round" filter="url(#sh)"/><text x="1254.6" y="584.8000000000001" font-size="22.8" text-anchor="middle" fill="#1c1c1c" >2</text><text x="1254.7" y="617.9" font-size="22.8" text-anchor="middle" fill="#1c1c1c" >-</text><path transform="translate(542.8 348.2)" d="M0 0V14.2L3.3 11L5.9 16.3L7.9 15.4L5.5 10.1H9.8z" fill="#fff" stroke="#444" stroke-width="0.9" stroke-linejoin="round" opacity="1"/><path transform="translate(689.4 442.6)" d="M0 0V14.2L3.3 11L5.9 16.3L7.9 15.4L5.5 10.1H9.8z" fill="#fff" stroke="#444" stroke-width="0.9" stroke-linejoin="round" opacity="1"/></svg>
</body></html>
